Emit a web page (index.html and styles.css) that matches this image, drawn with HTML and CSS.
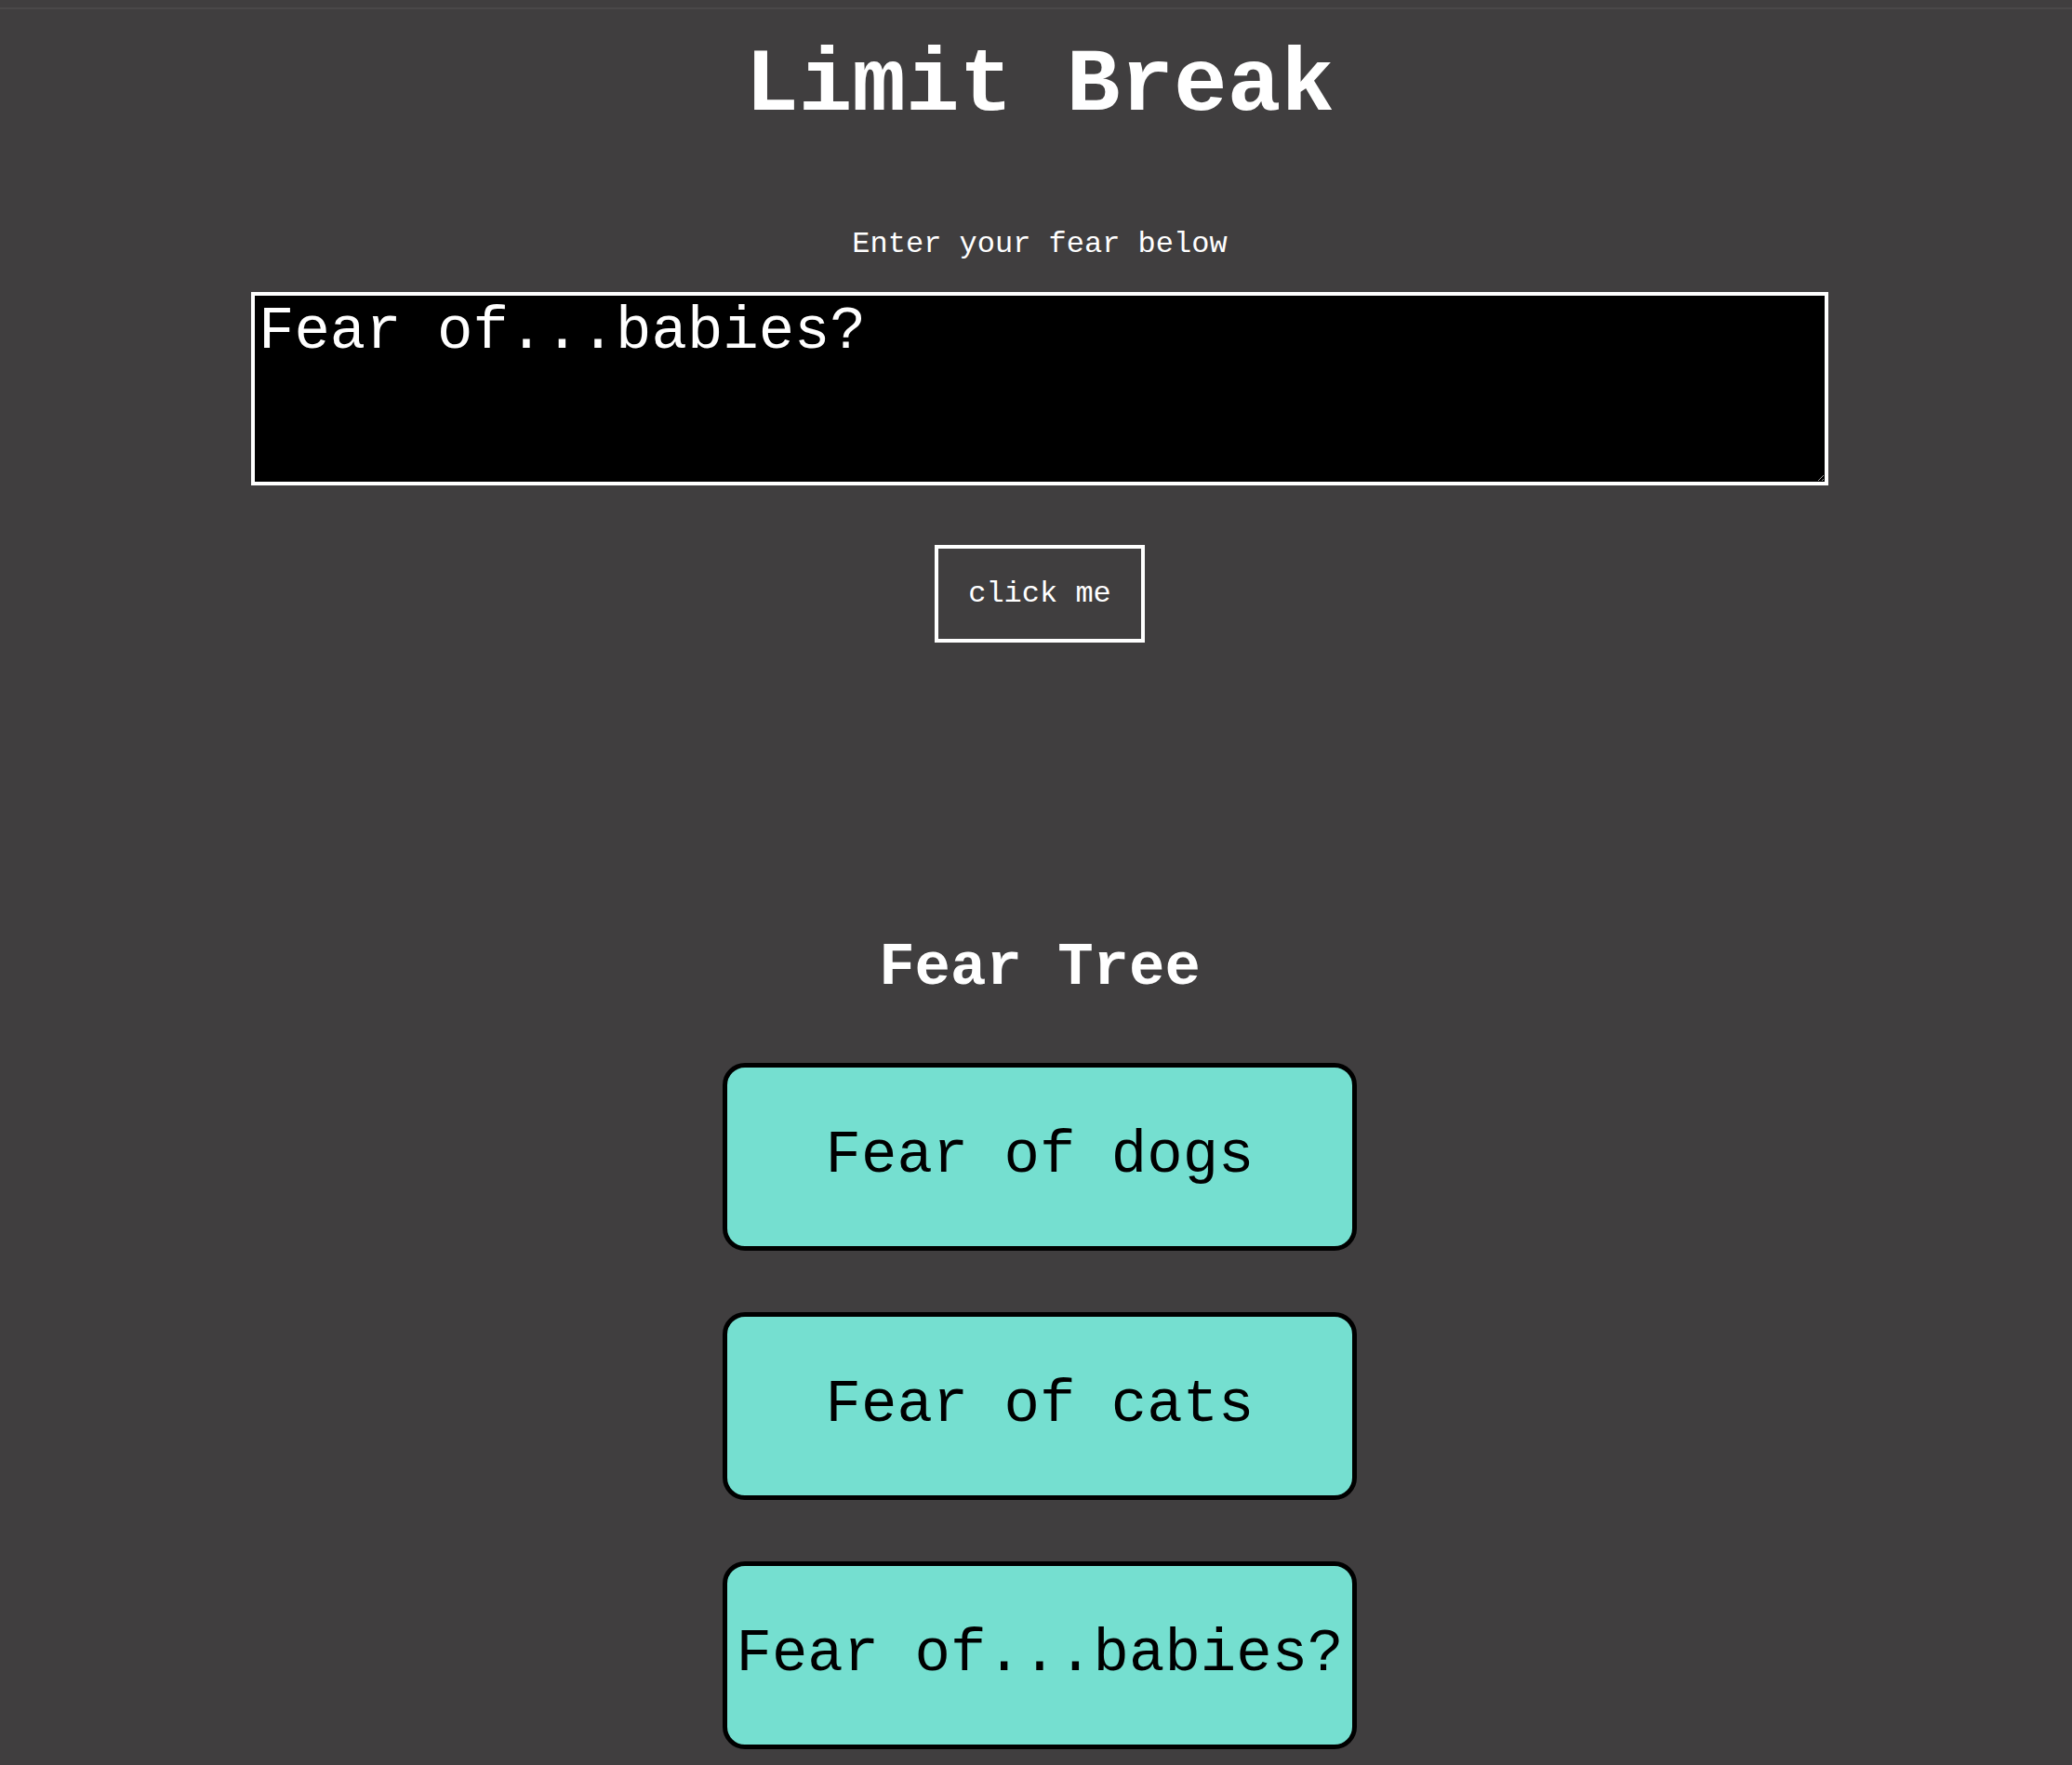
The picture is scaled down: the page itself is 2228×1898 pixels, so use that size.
FILE: index.html
```html
<!DOCTYPE html>
<html lang="en">
<head>
<meta charset="utf-8">
<title>Limit Break</title>
<link rel="stylesheet" href="styles.css">
</head>
<body>
<div class="topline"></div>
<main class="page">
  <h1 class="title">Limit Break</h1>
  <label class="label" for="fear">Enter your fear below</label>
  <textarea id="fear" class="fear-input">Fear of...babies?</textarea>
  <button class="btn" type="button">click me</button>
  <h2 class="tree-title">Fear Tree</h2>
  <ul class="tree">
    <li class="node">Fear of dogs</li>
    <li class="node">Fear of cats</li>
    <li class="node">Fear of...babies?</li>
  </ul>
</main>
</body>
</html>
```

FILE: styles.css
```css
html {
  background: #403e3f;
}
body {
  margin: 0;
  background: #403e3f;
  color: #ffffff;
  font-family: "Courier New", "Liberation Mono", monospace;
}
.topline {
  margin-top: 8px;
  height: 2px;
  background: #4a4849;
}
.page {
  display: flex;
  flex-direction: column;
  align-items: center;
  padding-left: 8px;
  padding-bottom: 40px;
}
.title {
  margin: 28px 0 0;
  font-size: 96px;
  font-weight: bold;
  line-height: normal;
}
.label {
  display: block;
  margin-top: 97px;
  font-size: 32px;
  line-height: normal;
}
.fear-input {
  display: block;
  box-sizing: border-box;
  margin-top: 33px;
  width: 1696px;
  height: 208px;
  padding: 3px 4px 4px;
  border: 4px solid #ffffff;
  background: #000000;
  color: #ffffff;
  font-family: "Courier New", "Liberation Mono", monospace;
  font-size: 64px;
  line-height: normal;
  outline: none;
}
.btn {
  margin-top: 64px;
  padding: 30px 32px;
  border: 4px solid #ffffff;
  background: transparent;
  color: #ffffff;
  font-family: "Courier New", "Liberation Mono", monospace;
  font-size: 32px;
  line-height: normal;
}
.tree-title {
  margin: 314px 0 0;
  font-size: 64px;
  font-weight: bold;
  line-height: normal;
}
.tree {
  list-style: none;
  margin: 66px 0 0;
  padding: 0;
  display: flex;
  flex-direction: column;
  align-items: center;
  gap: 66px;
}
.node {
  box-sizing: border-box;
  width: 682px;
  padding: 59px 0 61px;
  border: 5px solid #000000;
  border-radius: 24px;
  background: #75dfd0;
  color: #000000;
  font-size: 64px;
  line-height: normal;
  text-align: center;
  white-space: nowrap;
}
```
